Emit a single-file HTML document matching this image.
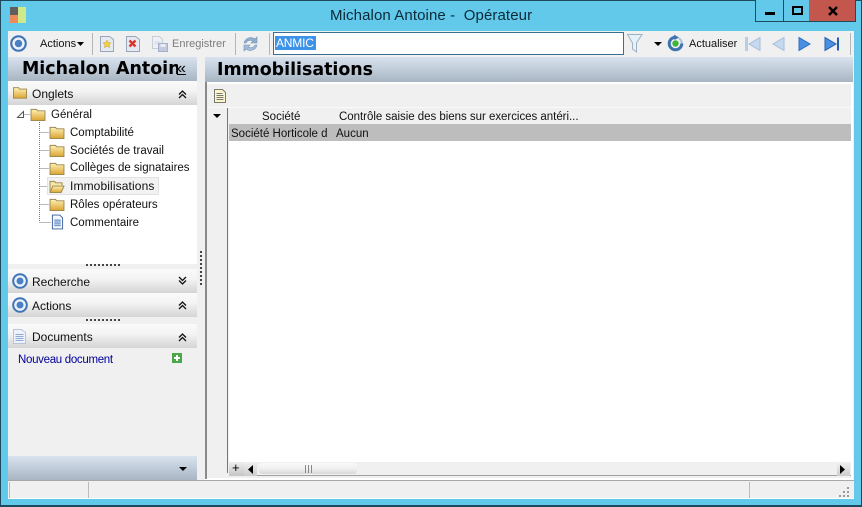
<!DOCTYPE html>
<html><head><meta charset="utf-8">
<style>
html,body{margin:0;padding:0;width:862px;height:507px;overflow:hidden;background:#62c9ea}
*{box-sizing:border-box}
.a{position:absolute}
.t{position:absolute;font-family:"Liberation Sans",Arial,sans-serif;font-size:11.500px;line-height:14px;color:#111;white-space:nowrap}
.b{position:absolute;font-family:"DejaVu Sans",Verdana,sans-serif;font-weight:bold;color:#000;white-space:nowrap;overflow:hidden}
.hd{position:absolute;background:linear-gradient(#d8e3ef,#a8b5c2)}
.sec{position:absolute;left:8px;width:189px;height:24px;background:linear-gradient(#fafafa,#f4f4f4 40%,#d4d4d4)}
.s12{font-size:12px}
svg{position:absolute;overflow:visible}
</style></head><body>
<svg width="0" height="0" style="position:absolute"><defs>
<linearGradient id="fg" x1="0" y1="0" x2="0" y2="1"><stop offset="0" stop-color="#fff2b4"/><stop offset="1" stop-color="#dba432"/></linearGradient>
<symbol id="folder" viewBox="0 0 16 14"><path d="M.5 13.500V1.500h6l1 1.500h8v10.500z" fill="url(#fg)" stroke="#9a8650"/></symbol>
<symbol id="ofolder" viewBox="0 0 16 14"><path d="M.5 12.500V1.500h5l1 1.500h7v3" fill="#f6e6a8" stroke="#9a8650"/><path d="M.5 13.500l3-7h12l-3 7z" fill="url(#fg)" stroke="#9a8650"/></symbol>
<symbol id="target" viewBox="0 0 16 16"><circle cx="8" cy="8" r="6.800" fill="#eef3fa" stroke="#3f74b8" stroke-width="2"/><circle cx="8" cy="8" r="3.500" fill="#4a80c4"/></symbol>
<symbol id="doc" viewBox="0 0 14 16"><path d="M1.500.5h8l3 3v12h-11z" fill="#f4f7fc" stroke="#3a5f9a"/><path d="M3.500 6h7M3.500 8h7M3.500 10h7M3.500 12h7" stroke="#4a7ac0"/></symbol>
<symbol id="up" viewBox="0 0 9 9"><path d="M1 4.500L4.500 1 8 4.500M1 8L4.500 4.500 8 8" fill="none" stroke="#111" stroke-width="1.300"/></symbol>
<symbol id="down" viewBox="0 0 9 9"><path d="M1 1L4.500 4.500 8 1M1 4.500L4.500 8 8 4.500" fill="none" stroke="#111" stroke-width="1.300"/></symbol>
</defs></svg>

<!-- window frame -->
<div class="a" style="left:0;top:0;width:862px;height:507px;border:1px solid #1d4a5c;border-bottom:2px solid #1d4a5c"></div>

<!-- title bar -->
<svg style="left:10px;top:7px" width="16" height="16"><rect width="8" height="8" fill="#5f5f5f"/><rect y="8" width="8" height="8" fill="#f0895a"/><rect x="8" width="8" height="16" fill="#cfe98a"/></svg>
<div class="t" style="left:330px;top:7px;font-size:15px;line-height:18px;color:#0c2a38;letter-spacing:.1px;white-space:pre">Michalon Antoine -  Opérateur</div>
<div class="a" style="left:755px;top:0;width:101px;height:22px;border:1px solid #1d4a5c;border-top:0;background:#62c9ea"></div>
<div class="a" style="left:783px;top:0;width:1px;height:21px;background:#1d4a5c"></div>
<div class="a" style="left:809px;top:0;width:46px;height:21px;background:#c4574d"></div>
<div class="a" style="left:765px;top:12px;width:10px;height:3px;background:#000"></div>
<div class="a" style="left:792px;top:6px;width:11px;height:9px;border:2px solid #000"></div>
<svg style="left:828px;top:6px" width="10" height="10"><path d="M1 1L9 9M9 1L1 9" stroke="#000" stroke-width="2.400"/></svg>

<!-- client background -->
<div class="a" style="left:8px;top:31px;width:846px;height:468px;background:#f0f0f0"></div>

<!-- toolbar -->
<svg style="left:10px;top:35px" width="17" height="17"><use href="#target" width="17" height="17"/></svg>
<div class="t" style="left:40px;top:37px;font-size:11px">Actions</div>
<svg style="left:77px;top:42px" width="7" height="4"><path d="M0 0h7L3.500 4z" fill="#000"/></svg>
<div class="a" style="left:92px;top:33px;width:1px;height:22px;background:#b5b5b5"></div>
<svg style="left:100px;top:36px" width="14" height="16"><path d="M.5.500h9l4 3v12H.5z" fill="#e4e9f2" stroke="#9aa6bb"/><path d="M7 4l1.200 2.600 2.800.3-2 1.900.6 2.800L7 10.200l-2.600 1.400.6-2.800-2-1.900 2.800-.3z" fill="#f2d13c" stroke="#c9a024" stroke-width=".5"/></svg>
<svg style="left:126px;top:36px" width="14" height="16"><path d="M.5.500h9l4 3v12H.5z" fill="#e4e9f2" stroke="#9aa6bb"/><path d="M3.500 4.500l6 6M9.500 4.500l-6 6" stroke="#d9342b" stroke-width="2.400"/></svg>
<svg style="left:152px;top:36px" width="16" height="16" opacity=".75"><path d="M.5.500h7l3 3v9H.5z" fill="#eef1f6" stroke="#b8c2d0"/><path d="M2.500 6h6M2.500 8h6" stroke="#c4cede"/><rect x="6.500" y="7.500" width="9" height="8" fill="#b4bdd8" stroke="#8e9ac0"/><rect x="8.500" y="8" width="5" height="3" fill="#e8ecf4"/></svg>
<div class="t" style="left:172px;top:37px;font-size:11px;color:#7c7c7c">Enregistrer</div>
<div class="a" style="left:235px;top:33px;width:1px;height:22px;background:#b5b5b5"></div>
<svg style="left:242px;top:35px" width="17" height="18"><path d="M2 8C3 3 9 1 13 4l2-2v6H9l2-2C8 4.500 5 5.500 4 8z" fill="#8eaed0" stroke="#7593b4" stroke-width=".6"/><path d="M15 10c-1 5-7 7-11 4l-2 2v-6h6l-2 2c3 1.500 6 .5 7-2z" fill="#a4bcd8" stroke="#7593b4" stroke-width=".6"/></svg>
<div class="a" style="left:269px;top:33px;width:1px;height:22px;background:#b5b5b5"></div>

<!-- search box -->
<div class="a" style="left:273px;top:32px;width:351px;height:23px;background:#fff;border:1px solid #3b6e90"></div>
<div class="a" style="left:275px;top:36px;width:41px;height:14px;background:#3d93e8"></div>
<div class="t" style="left:276px;top:36px;font-size:12px;color:#fff;letter-spacing:-.2px">ANMIC</div>

<svg style="left:627px;top:34px" width="16" height="19"><path d="M.5.500h14.500L9.500 9v9l-4-3V9z" fill="#e6f0f7" stroke="#9cb2c4"/></svg>
<svg style="left:654px;top:42px" width="8" height="4"><path d="M0 0h8L4 4z" fill="#000"/></svg>
<svg style="left:667px;top:35px" width="17" height="17"><path d="M8.500 2.200a6.300 6.300 0 1 0 6.300 6.300" fill="none" stroke="#3f74b0" stroke-width="3"/><path d="M14.800 8.500a6.300 6.300 0 0 0-3-5.300" fill="none" stroke="#a8c0d8" stroke-width="2"/><path d="M7 -.5l5 3-4.500 2.500z" fill="#3f74b0"/><circle cx="8.500" cy="8.500" r="3.200" fill="#3fb53a"/></svg>
<div class="t" style="left:689px;top:37px;font-size:11px">Actualiser</div>
<svg style="left:745px;top:37px" width="16" height="14"><rect x=".5" y=".5" width="2" height="13" fill="#b9cfe6" stroke="#a4bfdb" stroke-width=".6"/><path d="M15 .5v13L4 7z" fill="#c6d9ee" stroke="#a4bfdb"/></svg>
<svg style="left:772px;top:37px" width="13" height="14"><path d="M12 .5v13L1 7z" fill="#c6d9ee" stroke="#a4bfdb"/></svg>
<svg style="left:798px;top:37px" width="13" height="14"><path d="M1 .5v13L12 7z" fill="#4a90e2" stroke="#2f6fc0"/></svg>
<svg style="left:824px;top:37px" width="16" height="14"><path d="M1 .5v13L12 7z" fill="#4a90e2" stroke="#1f5fb0"/><rect x="13" y=".5" width="2" height="13" fill="#1f5fb0"/></svg>
<div class="a" style="left:850px;top:33px;width:1px;height:22px;background:#b5b5b5"></div>

<!-- left panel -->
<div class="hd" style="left:8px;top:57px;width:189px;height:24px"></div>
<div class="b" style="left:22px;top:58px;width:156px;height:22px;font-size:17.400px;line-height:22px">Michalon Antoine</div>
<div class="t" style="left:177px;top:61px;font-size:16px;line-height:15px;width:11px;color:#000;text-decoration:underline">«</div>

<div class="sec" style="top:81px"></div>
<svg style="left:13px;top:86px" width="14" height="13"><use href="#folder" width="14" height="13"/></svg>
<div class="t s12" style="left:32px;top:87px">Onglets</div>
<svg style="left:178px;top:90px" width="9" height="9"><use href="#up" width="9" height="9"/></svg>

<div class="a" style="left:8px;top:105px;width:189px;height:159px;background:#fff"></div>
<!-- tree lines -->
<svg style="left:8px;top:105px" width="60" height="125"><path d="M15.500 9.500H22M31.500 17V117M31.500 27.500H41M31.500 45.500H41M31.500 63.500H41M31.500 81.500H41M31.500 99.500H41M31.500 117.500H43" stroke="#777" stroke-dasharray="1 1" fill="none"/></svg>
<svg style="left:17px;top:111px" width="7" height="7"><path d="M6.500.5v6h-6z" fill="#fff" stroke="#555"/></svg>
<svg style="left:30px;top:108px" width="16" height="13"><use href="#folder" width="16" height="13"/></svg>
<div class="t" style="left:51px;top:108px">Général</div>
<svg style="left:49px;top:126px" width="16" height="13"><use href="#folder" width="16" height="13"/></svg>
<div class="t" style="left:70px;top:126px">Comptabilité</div>
<svg style="left:49px;top:144px" width="16" height="13"><use href="#folder" width="16" height="13"/></svg>
<div class="t" style="left:70px;top:144px">Sociétés de travail</div>
<svg style="left:49px;top:162px" width="16" height="13"><use href="#folder" width="16" height="13"/></svg>
<div class="t" style="left:70px;top:161px">Collèges de signataires</div>
<div class="a" style="left:47px;top:177px;width:112px;height:18px;background:#f2f2f2;border:1px solid #e2e2e2"></div>
<svg style="left:49px;top:180px" width="16" height="13"><use href="#ofolder" width="16" height="13"/></svg>
<div class="t" style="left:70px;top:179px;font-size:12px;letter-spacing:.12px">Immobilisations</div>
<svg style="left:49px;top:198px" width="16" height="13"><use href="#folder" width="16" height="13"/></svg>
<div class="t" style="left:70px;top:198px">Rôles opérateurs</div>
<svg style="left:51px;top:214px" width="13" height="16"><use href="#doc" width="13" height="16"/></svg>
<div class="t" style="left:70px;top:216px">Commentaire</div>

<!-- grippers -->
<div class="a" style="left:86px;top:264px;width:34px;height:2px;background:repeating-linear-gradient(90deg,#444 0 2px,transparent 2px 4px)"></div>
<div class="a" style="left:200px;top:251px;width:2px;height:35px;background:repeating-linear-gradient(#444 0 2px,transparent 2px 4px)"></div>

<div class="sec" style="top:269px"></div>
<svg style="left:12px;top:273px" width="16" height="16"><use href="#target" width="16" height="16"/></svg>
<div class="t s12" style="left:32px;top:275px">Recherche</div>
<svg style="left:178px;top:276px" width="9" height="9"><use href="#down" width="9" height="9"/></svg>

<div class="sec" style="top:293px"></div>
<svg style="left:12px;top:297px" width="16" height="16"><use href="#target" width="16" height="16"/></svg>
<div class="t s12" style="left:32px;top:299px">Actions</div>
<svg style="left:178px;top:301px" width="9" height="9"><use href="#up" width="9" height="9"/></svg>

<div class="a" style="left:86px;top:319px;width:34px;height:2px;background:repeating-linear-gradient(90deg,#444 0 2px,transparent 2px 4px)"></div>

<div class="sec" style="top:324px"></div>
<svg style="left:13px;top:329px" width="13" height="15"><path d="M.5.500h8l4 3v11H.5z" fill="#eef3fb" stroke="#b4c4dc"/><path d="M2.500 5.500h8M2.500 7.500h8M2.500 9.500h8M2.500 11.500h8" stroke="#8ea8d4"/></svg>
<div class="t s12" style="left:32px;top:330px">Documents</div>
<svg style="left:178px;top:333px" width="9" height="9"><use href="#up" width="9" height="9"/></svg>

<div class="t" style="left:18px;top:353px;color:#00009a;font-size:11.500px;letter-spacing:-.31px">Nouveau document</div>
<svg style="left:172px;top:353px" width="10" height="10"><rect width="10" height="10" fill="#4aa84a"/><path d="M5 2v6M2 5h6" stroke="#fff" stroke-width="2"/></svg>

<div class="hd" style="left:8px;top:456px;width:189px;height:24px"></div>
<svg style="left:179px;top:467px" width="8" height="4"><path d="M0 0h8L4 4z" fill="#000"/></svg>

<!-- right panel -->
<div class="hd" style="left:205px;top:57px;width:648px;height:25px"></div>
<div class="b" style="left:217px;top:59px;font-size:17.400px;line-height:22px">Immobilisations</div>

<div class="a" style="left:205px;top:82px;width:648px;height:398px;background:#fff"></div>
<div class="a" style="left:205px;top:82px;width:2px;height:397px;background:#8a8a8a"></div>
<div class="a" style="left:207px;top:84px;width:644px;height:394px;background:#f0f0f0"></div>
<svg style="left:214px;top:89px" width="12" height="14"><path d="M.5.500h8l3 3v10H.5z" fill="#fdf6cc" stroke="#7a7a6a"/><path d="M2.500 4.500h6M2.500 6.500h7M2.500 8.500h7M2.500 10.500h7" stroke="#777"/></svg>

<!-- grid -->
<div class="a" style="left:229px;top:124px;width:622px;height:340px;background:#fff"></div>
<div class="a" style="left:227px;top:107px;width:1px;height:366px;background:#777"></div>
<div class="a" style="left:208px;top:107px;width:643px;height:1px;background:#fafafa"></div>
<svg style="left:213px;top:114px" width="8" height="4"><path d="M0 0h8L4 4z" fill="#000"/></svg>
<div class="t" style="left:262px;top:110px">Société</div>
<div class="t" style="left:339px;top:110px;letter-spacing:-.03px">Contrôle saisie des biens sur exercices antéri...</div>
<div class="a" style="left:229px;top:124px;width:622px;height:17px;background:#bdbdbd"></div>
<div class="t" style="left:231px;top:127px;width:100px;overflow:hidden">Société Horticole d</div>
<div class="t" style="left:336px;top:127px">Aucun</div>

<!-- scrollbar -->
<div class="a" style="left:229px;top:462px;width:622px;height:14px;background:#f0f0f0;border-bottom:1px solid #a0a0a0"></div>
<div class="a" style="left:229px;top:462px;width:16px;height:14px;background:linear-gradient(#eee,#c4c4c4)"></div>
<div class="t" style="left:232px;top:461px;font-size:13px;color:#000">+</div>
<div class="a" style="left:244px;top:463px;width:13px;height:13px;background:linear-gradient(#eee,#ccc)"></div>
<svg style="left:248px;top:465px" width="5" height="9"><path d="M5 0v9L0 4.500z" fill="#000"/></svg>
<div class="a" style="left:259px;top:463px;width:98px;height:11px;border-radius:3px;background:linear-gradient(#fafafa,#f0f0f0 50%,#d8d8d8)"></div>
<div class="a" style="left:305px;top:465px;width:7px;height:8px;background:repeating-linear-gradient(90deg,#888 0 1px,transparent 1px 3px)"></div>
<div class="a" style="left:837px;top:463px;width:13px;height:13px;background:linear-gradient(#eee,#ccc)"></div>
<svg style="left:840px;top:465px" width="5" height="9"><path d="M0 0v9L5 4.500z" fill="#000"/></svg>

<!-- status bar -->
<div class="a" style="left:8px;top:480px;width:846px;height:1px;background:#a8a8a8"></div>
<div class="a" style="left:8px;top:481px;width:846px;height:18px;background:#f0f0f0;border-bottom:1px solid #fff"></div>
<div class="a" style="left:9px;top:482px;width:1px;height:16px;background:#bcbcbc"></div>
<div class="a" style="left:88px;top:482px;width:1px;height:16px;background:#bcbcbc"></div>
<div class="a" style="left:749px;top:482px;width:1px;height:16px;background:#bcbcbc"></div>
<svg style="left:838px;top:487px" width="12" height="11"><g fill="#9a9a9a"><rect x="9" y="0" width="2" height="2"/><rect x="5" y="4" width="2" height="2"/><rect x="9" y="4" width="2" height="2"/><rect x="1" y="8" width="2" height="2"/><rect x="5" y="8" width="2" height="2"/><rect x="9" y="8" width="2" height="2"/></g></svg>
</body></html>
